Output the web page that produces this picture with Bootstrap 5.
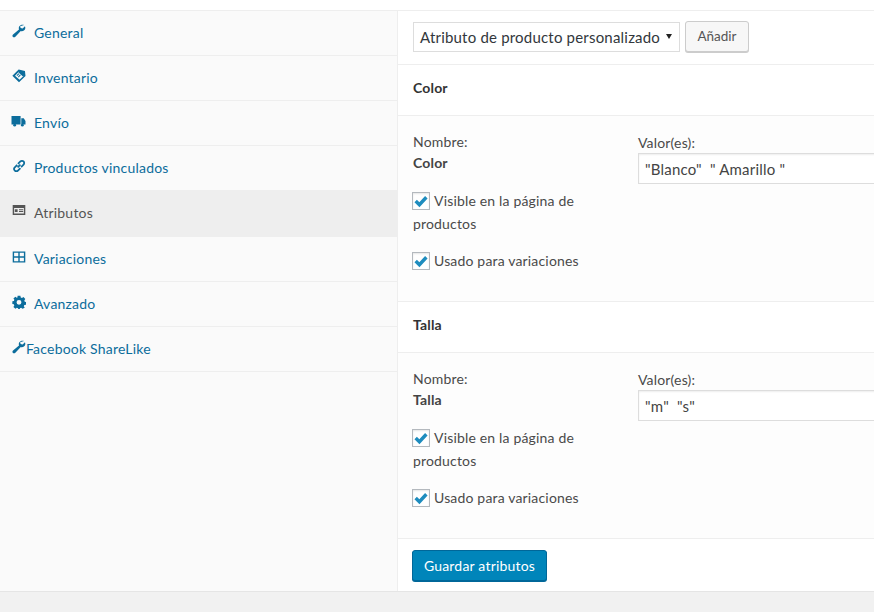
<!DOCTYPE html>
<html lang="es"><head><meta charset="utf-8"><title>Atributos</title>
<link rel="stylesheet" href="https://cdn.jsdelivr.net/npm/bootstrap@5.3.0/dist/css/bootstrap.min.css">
<style>
html,body{height:612px;overflow:hidden}
body{background:#f1f1f1;font-family:"Lato","Noto Sans",sans-serif;font-size:14px;color:#4a4a4a;letter-spacing:.17px}
.wp-panel{height:592px;background:#fff;border-bottom:1px solid #e5e5e5;overflow:hidden}
.top-gap{height:10px;background:#fff;border-bottom:1px solid #eee;box-sizing:content-box}
.tab-col{width:398px;flex:none;background:#fafafa;border-right:1px solid #eee;height:581px}
.tab-link{height:45px;display:flex;align-items:center;padding-left:12px;color:#0c6d9c;border-bottom:1px solid #eee;text-decoration:none;font-size:14px;padding-bottom:1px;letter-spacing:.2px}
.tab-link.on{background:#eee;color:#555;height:46px;padding-bottom:3px}
.tab-link svg{width:14px;height:14px;fill:currentColor;flex:none;margin-right:8px;margin-top:-4px}
.tab-link.tight svg{margin-right:0}
.main-col{flex:1 1 auto;min-width:0}
.bar{height:54px;border-bottom:1px solid #eee;padding-left:15px;padding-top:8px;gap:5px}
.fake-select{width:267px;height:30px;border:1px solid #ddd;background:#fff;font-size:15px;color:#32373c;padding-left:6px;padding-right:7px;margin-top:3px;letter-spacing:.2px}
.fake-select i{border-left:3px solid transparent;border-right:3px solid transparent;border-top:5px solid #222;margin-top:-2px}
.add-btn{height:31px;width:64px;border:1px solid #ccc;background:#f7f7f7;border-radius:3px;box-shadow:0 1px 0 #ccc;color:#555;font-size:13.5px;padding:0;margin-top:2px}
.attr-head{height:51px;border-bottom:1px solid #eee;padding-left:15px;font-weight:700;color:#333;font-size:14px;display:flex;align-items:center;padding-bottom:6px}
.attr-body{height:186px;border-bottom:1px solid #eee;background:#fdfdfd;padding:18px 0 0 15px;gap:0}
.name-col{width:225px;flex:none;line-height:21px;margin-top:-3px}
.name-col b{color:#444;display:block}
.val-col{flex:1;min-width:0;line-height:17px}
.val-box{margin-top:2px;height:31px;width:260px;border:1px solid #ddd;background:#fff;padding:0 6px;font-size:15px;display:flex;align-items:center;color:#444;white-space:nowrap;letter-spacing:.2px;padding-top:2px;box-shadow:inset 0 1px 2px rgba(0,0,0,.07)}
.chk-line{line-height:23px;width:200px;margin-top:16px;display:block}
.chk-line.second{margin-top:14px}
.chk-box{display:inline-block;width:18px;height:18px;border:1px solid #b4b9be;background:#fff;vertical-align:-4px;margin-left:-1px;margin-right:4px;position:relative;box-shadow:inset 0 1px 2px rgba(0,0,0,.1)}
.chk-box svg{position:absolute;left:0;top:0;width:16px;height:16px;fill:none;stroke:#1e8cbe;stroke-width:3.200}
.foot-row{height:52px;padding:11px 0 0 14px}
.save-btn{width:135px;height:31px;background:#0085ba;border:1px solid #006799;border-radius:3px;color:#fff;font-size:14px;letter-spacing:.2px;padding:0;box-shadow:0 1px 0 #006799}
</style></head><body>
<svg width="0" height="0" class="d-none"><defs>
<symbol id="wr" viewBox="0 0 20 20"><path d="M17.200 1.500c-2.400-1.100-5.300-.4-6.700 1.800-.9 1.400-1 3-.5 4.400L1.500 15c-1.100 1.100-1.100 2.500-.2 3.400.9.900 2.400.9 3.500-.2l7.700-8.100c1.500.5 3.200.3 4.500-.7 2-1.400 2.600-4.100 1.500-6.300l-3.300 3.400-2.900-.7-.7-2.700z"/></symbol>
</defs></svg>
<div class="wp-panel">
<div class="top-gap"></div>
<div class="d-flex">
<nav class="tab-col">
<a class="tab-link" href="#"><svg><use href="#wr"/></svg>General</a>
<a class="tab-link" href="#"><svg viewBox="0 0 20 20"><path fill-rule="evenodd" d="M9.500.8l9 2.200.8 7-9.300 9L.5 9.500zM9.800 4L4.300 9.500l6.500 6 5.500-5.500z"/><path d="M6.500 9l3-3 1 1-3 3zM8.500 11l3-3 1 1-3 3zM9 4.500l1.200-1.200 5.500 1.500.8 4.500-1.200 1.200z"/></svg>Inventario</a>
<a class="tab-link" href="#"><svg viewBox="0 0 20 20" style="margin-right:8px;margin-left:-1px;width:15px;"><path d="M0 3h13v12H0zM14 6h3.500L20 10v5h-6z"/><circle cx="4.500" cy="16" r="2"/><circle cx="15.500" cy="16" r="2"/></svg>Envío</a>
<a class="tab-link" href="#"><svg viewBox="0 0 20 20"><path fill="none" stroke="currentColor" stroke-width="2.500" d="M8 12l4-4M7.500 8.500L4 12a3.100 3.100 0 0 0 4.500 4.500L12 13M8.500 7L12 3.500A3.100 3.100 0 0 1 16.500 8L13 11.500"/></svg>Productos vinculados</a>
<a class="tab-link on" href="#"><svg viewBox="0 0 20 20"><path fill-rule="evenodd" d="M1 3h18v14H1zM3 7v8h14V7zM4 9h4v4H4zM10 9h6v1.500h-6zM10 11.500h6V13h-6z"/></svg>Atributos</a>
<a class="tab-link" href="#"><svg viewBox="0 0 20 20"><path fill-rule="evenodd" d="M1 2h18v16H1zM3 4v5h6V4zM11 4v5h6V4zM3 11v5h6v-5zM11 11v5h6v-5z"/></svg>Variaciones</a>
<a class="tab-link" href="#"><svg viewBox="0 0 20 20"><path fill-rule="evenodd" d="M8 1h4l.5 2.500 1.700.7L16.400 3 19 5.800l-1.400 2 .6 1.700 1.800.5v4l-2.400.4-.7 1.700 1.300 2L15 19.500l-2-1.300-1.600.7L11 20.500H9l-.4-1.600-1.700-.7-2 1.300L2 17l1.300-2-.7-1.700L.5 13V9l2.200-.5.7-1.700L2 5 4.800 2.500l2 1.300 1-.4zM10 7a3.500 3.500 0 1 0 0 7 3.500 3.500 0 0 0 0-7z"/></svg>Avanzado</a>
<a class="tab-link tight" href="#"><svg><use href="#wr"/></svg>Facebook ShareLike</a>
</nav>
<div class="main-col">
<div class="bar d-flex align-items-start">
<div class="fake-select d-flex align-items-center justify-content-between"><span>Atributo de producto personalizado</span><i></i></div>
<button class="add-btn" type="button">Añadir</button>
</div>

<div class="attr-head">Color</div>
<div class="attr-body d-flex">
<div class="name-col"><span>Nombre:</span><b>Color</b>
<label class="chk-line"><span class="chk-box"><svg viewBox="0 0 15 15"><path d="M2.500 7.500l3.500 3.500 6.500-7"/></svg></span>Visible en la página de productos</label>
<label class="chk-line second"><span class="chk-box"><svg viewBox="0 0 15 15"><path d="M2.500 7.500l3.500 3.500 6.500-7"/></svg></span>Usado para variaciones</label>
</div>
<div class="val-col"><span>Valor(es):</span><div class="val-box">"Blanco"&nbsp; " Amarillo "</div></div>
</div>

<div class="attr-head">Talla</div>
<div class="attr-body d-flex">
<div class="name-col"><span>Nombre:</span><b>Talla</b>
<label class="chk-line"><span class="chk-box"><svg viewBox="0 0 15 15"><path d="M2.500 7.500l3.500 3.500 6.500-7"/></svg></span>Visible en la página de productos</label>
<label class="chk-line second"><span class="chk-box"><svg viewBox="0 0 15 15"><path d="M2.500 7.500l3.500 3.500 6.500-7"/></svg></span>Usado para variaciones</label>
</div>
<div class="val-col"><span>Valor(es):</span><div class="val-box">"m"&nbsp; "s"</div></div>
</div>

<div class="foot-row"><button class="save-btn" type="button">Guardar atributos</button></div>
</div>
</div>
</div>
<script src="https://cdn.jsdelivr.net/npm/bootstrap@5.3.0/dist/js/bootstrap.bundle.min.js"></script>
</body></html>
